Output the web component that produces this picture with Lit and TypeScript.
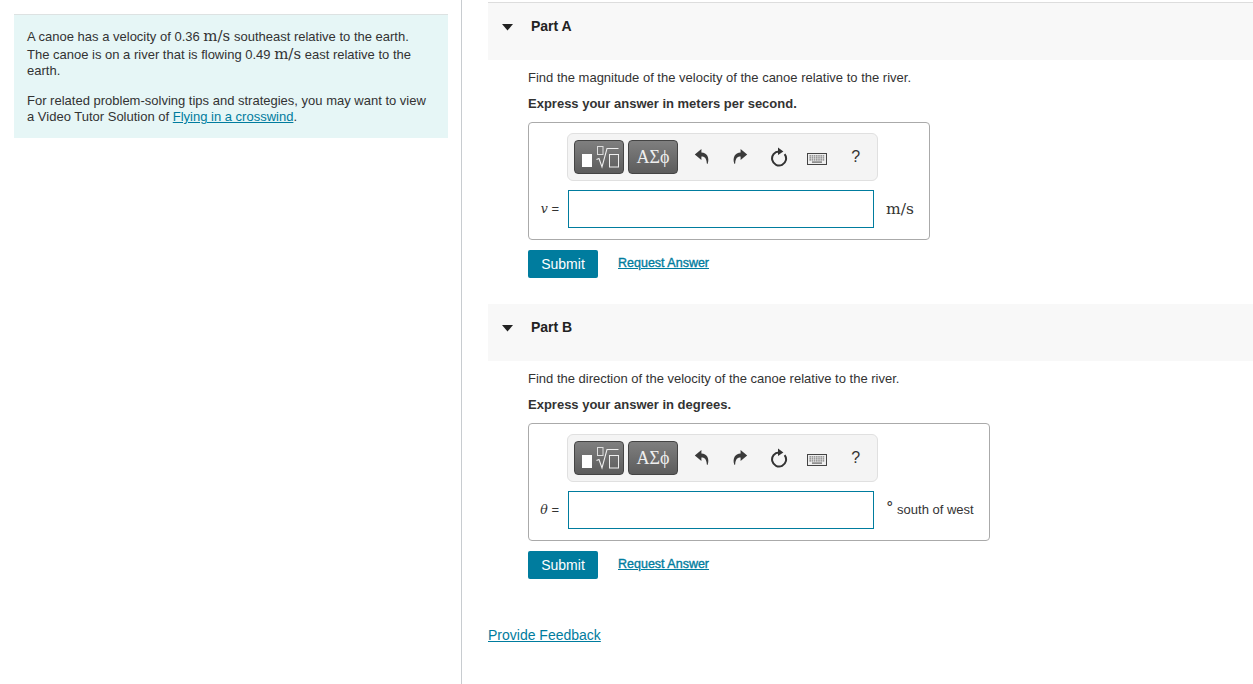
import { LitElement, html, css, svg } from "lit";
import { customElement } from "lit/decorators.js";

const undo = html`<svg class="ic" width="16" height="18" viewBox="0 0 16 18"><path fill="#3a3a3a" d="M7.4 1 L0.8 6.6 L7.4 12 V8.6 C10.4 8.6 12.4 10 12.8 15.2 C12.9 16.2 13.5 16.2 13.8 15.2 C15.6 9.4 13 4.6 7.4 4.4 Z"/></svg>`;
const redo = html`<svg class="ic" width="16" height="18" viewBox="0 0 16 18"><path fill="#3a3a3a" d="M8.6 1 L15.2 6.6 L8.6 12 V8.6 C5.6 8.6 3.6 10 3.2 15.2 C3.1 16.2 2.5 16.2 2.2 15.2 C0.4 9.4 3 4.6 8.6 4.4 Z"/></svg>`;
const reset = html`<svg class="ic" width="18" height="20" viewBox="0 0 18 20"><path fill="none" stroke="#333" stroke-width="2" d="M9 4.5 A7 7 0 1 0 14.6 7.2"/><path fill="#333" d="M8 0.6 L13.4 4.4 L8 8 Z"/></svg>`;
const keyRows = [0, 1, 2].map((r) =>
  [0, 1, 2, 3, 4, 5, 6].map((c) => svg`<rect x="${2.4 + c * 2.2}" y="${2.3 + r * 2}" width="1.6" height="1.2" fill="#777"/>`)
);
const keyboard = html`<svg class="kb" width="20" height="12" viewBox="0 0 20 12"><rect x="0.5" y="0.5" width="19" height="11" fill="#eee" stroke="#444"/>${keyRows}<rect x="5" y="8.4" width="10" height="1.4" fill="#777"/></svg>`;
const templ = html`<svg width="48" height="32" viewBox="1 1 48 32"><rect x="8" y="14" width="10" height="13" fill="#fff"/><rect x="23.5" y="6.5" width="5.5" height="8" fill="none" stroke="#ddd"/><path fill="none" stroke="#eee" stroke-width="1.1" d="M22.5 19.5 L25 18.5 L28 27 L33 8.5 H44.5"/><rect x="35.5" y="14.5" width="9" height="12.5" fill="none" stroke="#eee"/></svg>`;

@customElement("math-toolbar")
class MathToolbar extends LitElement {
  static styles = css`
    :host { display: flex; align-items: center; width: 311px; height: 48px; box-sizing: border-box; margin-left: 38px;
      padding-left: 6px; background: #f4f4f4; border: 1px solid #e0e0e0; border-radius: 6px; }
    .b { width: 50px; height: 34px; box-sizing: border-box; display: flex; align-items: center; justify-content: center;
      margin-right: 4px; border: 1px solid #444; border-radius: 4px; background: linear-gradient(#7f7f7f, #5c5c5c);
      color: #eee; font: 18px "Liberation Serif", serif; }
    .icons { display: grid; grid-template-columns: repeat(5, 38.5px); margin-left: 0.5px; justify-items: center; align-items: center; }
    .kb { margin-top: 4px; }
    .q { font: 16px "Liberation Sans", sans-serif; color: #333; }
  `;
  render() {
    return html`<div class="b">${templ}</div><div class="b">ΑΣϕ</div>
      <div class="icons">${undo}${redo}${reset}${keyboard}<span class="q">?</span></div>`;
  }
}

@customElement("app-root")
class AppRoot extends LitElement {
  static styles = css`
    :host { display: grid; grid-template-columns: 462px 1fr; height: 100vh; min-height: 684px; overflow: hidden;
      font: 13px/16px "Liberation Sans", Arial, sans-serif; color: #333; background: #fff; }
    .left { border-right: 1px solid #c8ccd0; padding: 14px 13px 0 14px; }
    .intro { background: #e6f6f6; border-top: 1px solid #dde2e2; padding: 12px 20px 12px 13px; height: 124px; box-sizing: border-box; }
    .intro p { margin: 0 0 14px; }
    .intro p:last-child { margin: 0; }
    .m { font-family: "DejaVu Serif", serif; font-size: 15px; line-height: 18px; }
    a { color: #007c9e; text-decoration: underline; }
    .right { padding: 2px 0 0 26px; }
    .head { display: flex; align-items: flex-start; background: #f8f8f8; height: 57px; box-sizing: border-box; padding: 15px 0 0 14px; font-weight: bold; font-size: 14px; color: #222; }
    .head.top { border-top: 1px solid #ddd; height: 58px; }
    .head svg { margin: 6px 18px 0 0; }
    .body { padding: 10px 0 0 40px; }
    .body p { margin: 0; line-height: 16px; }
    .body p.b { font-weight: bold; margin-top: 10px; }
    .box { width: fit-content; margin-top: 10px; border: 1px solid #aaa; border-radius: 4px; padding: 10px 0 11px 0; }
    .row { display: flex; align-items: center; margin-top: 9px; }
    .label { width: 39px; padding-right: 9px; box-sizing: border-box; text-align: right; white-space: nowrap; }
    .label i { font-family: "DejaVu Serif", serif; font-size: 12.5px; }
    .input { width: 306px; height: 38px; box-sizing: border-box; border: 1px solid #007c9e; background: #fff; }
    .unit { margin-left: 12px; margin-right: 15px; white-space: nowrap; }
    .unit .m { font-size: 15.5px; }
    .deg { font-family: "DejaVu Serif", serif; font-size: 15px; line-height: 1; position: relative; top: -2px; }
    .actions { display: flex; align-items: flex-start; margin-top: 10px; height: 28px; }
    .submit { width: 70px; height: 28px; display: flex; align-items: center; justify-content: center; background: #007c9e; color: #fff; border-radius: 2px; font-size: 14px; }
    .req { margin: 5px 0 0 20px; font-size: 12.5px; -webkit-text-stroke: 0.35px #007c9e; line-height: 16px; }
    section + section { margin-top: 26px; }
    .fb { display: block; margin-top: 47px; font-size: 14px; line-height: 18px; width: fit-content; }
  `;

  part(title: string, q: string, hint: string, label: unknown, unit: unknown, top: boolean) {
    return html`<section>
      <div class="head ${top ? "top" : ""}">
        <svg width="11" height="7" viewBox="0 0 11 7"><path d="M0 0 H11 L5.5 6.5 Z" fill="#222"/></svg>
        <span>${title}</span>
      </div>
      <div class="body">
        <p>${q}</p><p class="b">${hint}</p>
        <div class="box">
          <math-toolbar></math-toolbar>
          <div class="row"><span class="label">${label}</span><div class="input"></div><span class="unit">${unit}</span></div>
        </div>
        <div class="actions"><div class="submit">Submit</div><a class="req" href="#">Request Answer</a></div>
      </div>
    </section>`;
  }

  render() {
    const ms = html`<span class="m">m/s</span>`;
    return html`<div class="left"><div class="intro">
        <p>A canoe has a velocity of 0.36 ${ms} southeast relative to the earth. The canoe is on a river that is flowing 0.49 ${ms} east relative to the earth.</p>
        <p>For related problem-solving tips and strategies, you may want to view a Video Tutor Solution of <a href="#">Flying in a crosswind</a>.</p>
      </div></div>
      <div class="right">
        ${this.part("Part A", "Find the magnitude of the velocity of the canoe relative to the river.", "Express your answer in meters per second.", html`<i>v</i> =`, ms, true)}
        ${this.part("Part B", "Find the direction of the velocity of the canoe relative to the river.", "Express your answer in degrees.", html`<i>θ</i> =`, html`<span class="deg">°</span> south of west`, false)}
        <a class="fb" href="#">Provide Feedback</a>
      </div>`;
  }
}
